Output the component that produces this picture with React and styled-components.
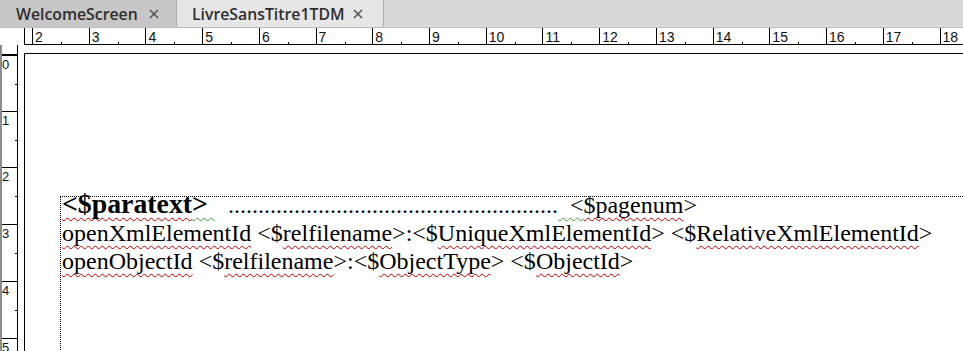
import React from "react";
import styled, { createGlobalStyle } from "styled-components";

const Global = createGlobalStyle`
  html, body {
    margin: 0;
    padding: 0;
    background: #ffffff;
    overflow: hidden;
  }
  #root {
    width: 963px;
    height: 351px;
    overflow: hidden;
  }
`;

const UNIT = 56.72;

const TabBar = styled.div`
  display: flex;
  height: 28px;
  background: #d8d8d8;
  border-bottom: 1px solid #bcbcbc;
  box-sizing: border-box;
`;

const Tab = styled.div`
  display: flex;
  align-items: center;
  justify-content: space-between;
  box-sizing: border-box;
  width: ${(p) => p.$width}px;
  padding: 0 ${(p) => p.$padRight}px 0 ${(p) => p.$padLeft}px;
  background: ${(p) => (p.$active ? "#e6e6e6" : "#c7c7c7")};
  border-right: 1px solid #b0b0b0;
  font-family: "Open Sans", "Noto Sans", sans-serif;
  font-weight: 600;
  font-size: 15.8px;
  color: #2e2e2e;
`;

const Close = styled.svg`
  width: 10px;
  height: 10px;
  flex: none;
`;

const Workspace = styled.div`
  display: grid;
  grid-template-columns: 24px 1fr;
  grid-template-rows: 17px 1fr;
  height: 323px;
`;

const Corner = styled.div`
  background: #ffffff;
`;

const HRuler = styled.div`
  display: flex;
  overflow: hidden;
  box-sizing: border-box;
  padding-left: 7px;
  border-left: 1px solid #000;
  border-bottom: 1px solid #000;
`;

const HUnit = styled.div`
  position: relative;
  flex: none;
  box-sizing: border-box;
  width: ${UNIT}px;
  border-left: 1px solid #000;
  padding: 2px 0 0 2px;
  font-family: "Liberation Sans", Arial, sans-serif;
  font-size: 14px;
  line-height: 14px;
  color: #111;
  &::after {
    content: "";
    position: absolute;
    left: 28px;
    bottom: 0;
    width: 1px;
    height: 2px;
    background: #000;
  }
`;

const VRulerWrap = styled.div`
  display: flex;
  overflow: hidden;
`;

const VRuler = styled.div`
  width: 15px;
  box-sizing: content-box;
  border-left: 2px solid #8c8c8c;
  border-right: 1px solid #000;
  padding-top: 9px;
  overflow: hidden;
`;

const VUnit = styled.div`
  position: relative;
  box-sizing: border-box;
  height: ${UNIT}px;
  border-top: ${(p) => (p.$first ? 2 : 1)}px solid #000;
  padding: 2px 0 0 0;
  font-family: "Liberation Sans", Arial, sans-serif;
  font-size: 13px;
  line-height: 13px;
  color: #111;
  &::after {
    content: "";
    position: absolute;
    right: 0;
    top: 28px;
    width: 2px;
    height: 1px;
    background: #000;
  }
`;

const Canvas = styled.div`
  padding-top: 8px;
  overflow: hidden;
`;

const Page = styled.div`
  height: 100%;
  box-sizing: border-box;
  border-top: 1px solid #000;
  border-left: 1px solid #000;
  padding: 142px 0 0 35px;
`;

const Frame = styled.div`
  height: 100%;
  border-top: 1px dotted #000;
  border-left: 1px dotted #000;
  padding-left: 1px;
`;

const Lines = styled.div`
  margin-top: -7px;
  font-family: "Liberation Serif", "Times New Roman", serif;
  font-size: 24px;
  line-height: 28.5px;
  color: #000;
  white-space: pre;
`;

const Line = styled.div`
  display: flex;
  align-items: baseline;
  height: 28.5px;
`;

const Bold = styled.span`
  font-weight: 700;
  font-size: 27.8px;
`;

const Squiggle = styled.span`
  text-decoration-line: underline;
  text-decoration-style: wavy;
  text-decoration-color: ${(p) => (p.$green ? "#3c9a3c" : "#c00000")};
  text-decoration-thickness: 1px;
  text-underline-offset: 4px;
  text-decoration-skip-ink: none;
`;

const Leader = styled.span`
  margin-left: 13px;
`;

const CloseIcon = () => (
  <Close viewBox="0 0 10 10">
    <path d="M1 1 L9 9 M9 1 L1 9" stroke="#555" strokeWidth="1.6" fill="none" />
  </Close>
);

const App = () => {
  const hUnits = [];
  for (let n = 2; n <= 18; n++) hUnits.push(n);
  const vUnits = [0, 1, 2, 3, 4, 5];

  return (
    <>
      <Global />
      <TabBar>
        <Tab $width={177} $padLeft={16} $padRight={17}>
          WelcomeScreen
          <CloseIcon />
        </Tab>
        <Tab $active $width={207} $padLeft={15} $padRight={20}>
          LivreSansTitre1TDM
          <CloseIcon />
        </Tab>
      </TabBar>

      <Workspace>
        <Corner />
        <HRuler>
          {hUnits.map((n) => (
            <HUnit key={n}>{n}</HUnit>
          ))}
        </HRuler>

        <VRulerWrap>
          <VRuler>
            {vUnits.map((n) => (
              <VUnit key={n} $first={n === 0}>
                {n}
              </VUnit>
            ))}
          </VRuler>
        </VRulerWrap>

        <Canvas>
          <Page>
            <Frame>
              <Lines>
                <Line>
                  <Bold>
                    <Squiggle>{"<$paratext"}</Squiggle>
                    <Squiggle $green>{"> "}</Squiggle>
                  </Bold>
                  <Leader>{".".repeat(55)}</Leader>
                  <Squiggle $green>{"  <"}</Squiggle>
                  <Squiggle>{"$pagenum"}</Squiggle>
                  {">"}
                </Line>
                <Line>
                  <Squiggle>openXmlElementId</Squiggle>
                  {" <$"}
                  <Squiggle>relfilename</Squiggle>
                  {">:<$"}
                  <Squiggle>UniqueXmlElementId</Squiggle>
                  {"> <$"}
                  <Squiggle>RelativeXmlElementId</Squiggle>
                  {">"}
                </Line>
                <Line>
                  <Squiggle>openObjectId</Squiggle>
                  {" <$"}
                  <Squiggle>relfilename</Squiggle>
                  {">:<$"}
                  <Squiggle>ObjectType</Squiggle>
                  {"> <$"}
                  <Squiggle>ObjectId</Squiggle>
                  {">"}
                </Line>
              </Lines>
            </Frame>
          </Page>
        </Canvas>
      </Workspace>
    </>
  );
};

export default App;
